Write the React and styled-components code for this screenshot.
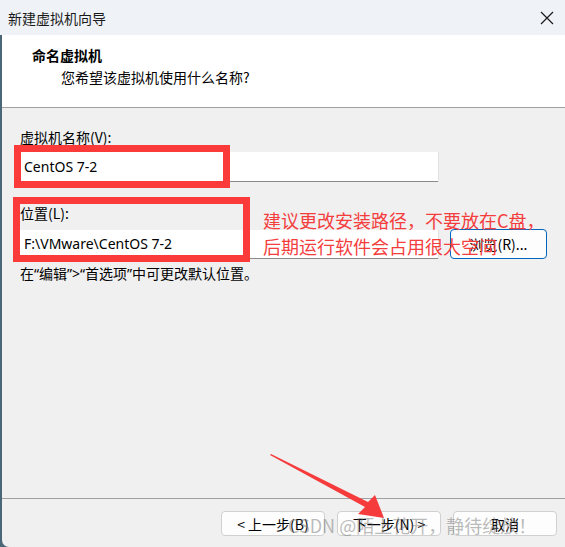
import React from "react";
import styled, { createGlobalStyle } from "styled-components";

const GlobalStyle = createGlobalStyle`
  body {
    margin: 0;
    background: #f0f0f0;
    font-family: "Noto Sans CJK SC", "Noto Sans", sans-serif;
  }
`

const Desktop = styled.div`
  position: relative;
  width: 565px;
  height: 547px;
  overflow: hidden;
  background: #4a6777;
`

const Window = styled.div`
  margin-left: 2px;
  height: 100%;
  display: flex;
  flex-direction: column;
  background: #f0f0f0;
  border-bottom-left-radius: 7px;
  color: #000;
  font-size: 14px;
`

const TitleBar = styled.div`
  flex: none;
  height: 35px;
  display: flex;
  align-items: center;
  justify-content: space-between;
  padding: 0 11px 0 8px;
  margin-left: -2px;
  background: #eff2f7;
  color: #1a1a1a;
`

const Header = styled.div`
  flex: none;
  height: 72px;
  background: #fff;
  border-bottom: 1px solid #a0a0a0;
`

const HeaderTitle = styled.div`
  margin: 10px 0 0 30px;
  line-height: 20px;
  font-weight: bold;
`

const HeaderSub = styled.div`
  margin: 2px 0 0 59px;
  line-height: 20px;
`

const Content = styled.div`
  flex: 1;
  padding: 19px 0 0 18px;
`

const Label = styled.div`
  line-height: 20px;
  margin-top: ${p => p.$top || 0}px;
  margin-bottom: ${p => p.$bottom || 0}px;
`

const Row = styled.div`
  display: flex;
  align-items: center;
  gap: 12px;
`

const Input = styled.div`
  box-sizing: border-box;
  width: 418px;
  height: ${p => p.$h || 30}px;
  padding-left: 4px;
  display: flex;
  align-items: center;
  background: #fff;
  border-bottom: 1px solid #8a8a8a;
  box-shadow: 1px 0 0 #e2e2e2;
  font-family: "Noto Sans", "Noto Sans CJK SC", sans-serif;
`

const Button = styled.div`
  box-sizing: border-box;
  width: ${p => p.$w || 104}px;
  height: ${p => p.$h || 25}px;
  display: flex;
  align-items: center;
  justify-content: center;
  background: #fdfdfd;
  border: 1px solid ${p => (p.$focus ? "#0067c0" : "#d0d0d0")};
  border-radius: 4px;
  font-size: 14px;
`

const Hint = styled.div`
  margin-top: 5px;
  line-height: 20px;
  font-family: "Noto Sans", "Noto Sans CJK SC", sans-serif;
`

const Footer = styled.div`
  flex: none;
  display: flex;
  justify-content: flex-end;
  gap: 12px;
  padding: 12px 8px 11px;
  border-top: 1px solid #a0a0a0;
`

const RedBox = styled.div`
  position: absolute;
  box-sizing: border-box;
  left: ${p => p.$x}px;
  top: ${p => p.$y}px;
  width: ${p => p.$w}px;
  height: ${p => p.$h}px;
  border: 7px solid #fb3a3a;
`

const Note = styled.div`
  position: absolute;
  left: 263px;
  top: 207px;
  color: #f43d3d;
  font-size: 18px;
  line-height: 26px;
`

const Watermark = styled.div`
  position: absolute;
  left: 288px;
  top: 512px;
  font-size: 18px;
  line-height: 26px;
  color: rgba(120, 120, 120, 0.5);
  white-space: nowrap;
  pointer-events: none;
`

const Arrow = styled.svg`
  position: absolute;
  left: 260px;
  top: 445px;
`

function CloseIcon() {
  return (
    <svg width="14" height="14" viewBox="0 0 14 14">
      <path d="M1 1 L13 13 M13 1 L1 13" stroke="#1a1a1a" strokeWidth="1.2" fill="none" />
    </svg>
  )
}

export default function App() {
  return (
    <Desktop>
      <GlobalStyle />
      <Window>
        <TitleBar>
          <span>新建虚拟机向导</span>
          <CloseIcon />
        </TitleBar>
        <Header>
          <HeaderTitle>命名虚拟机</HeaderTitle>
          <HeaderSub>您希望该虚拟机使用什么名称?</HeaderSub>
        </Header>
        <Content>
          <Label $bottom={5}>虚拟机名称(V):</Label>
          <Input $h={30}>CentOS 7-2</Input>
          <Label $top={21} $bottom={6}>位置(L):</Label>
          <Row>
            <Input $h={29}>F:\VMware\CentOS 7-2</Input>
            <Button $w={97} $h={30} $focus>浏览(R)...</Button>
          </Row>
          <Hint>在“编辑”&gt;“首选项”中可更改默认位置。</Hint>
        </Content>
        <Footer>
          <Button>&lt; 上一步(B)</Button>
          <Button>下一步(N) &gt;</Button>
          <Button>取消</Button>
        </Footer>
      </Window>

      <RedBox $x={14} $y={145} $w={216} $h={43} />
      <RedBox $x={13} $y={197} $w={237} $h={65} />
      <Note>
        建议更改安装路径，不要放在C盘，
        <br />
        后期运行软件会占用很大空间
      </Note>
      <Arrow width="140" height="80" viewBox="0 0 140 80">
        <polygon points="10,10 11,9 108,57 115,50 124,73 98,69 105,62" fill="#f53b3b" />
      </Arrow>
      <Watermark>CSDN @陌上花开，静待绽放！</Watermark>
    </Desktop>
  )
}
